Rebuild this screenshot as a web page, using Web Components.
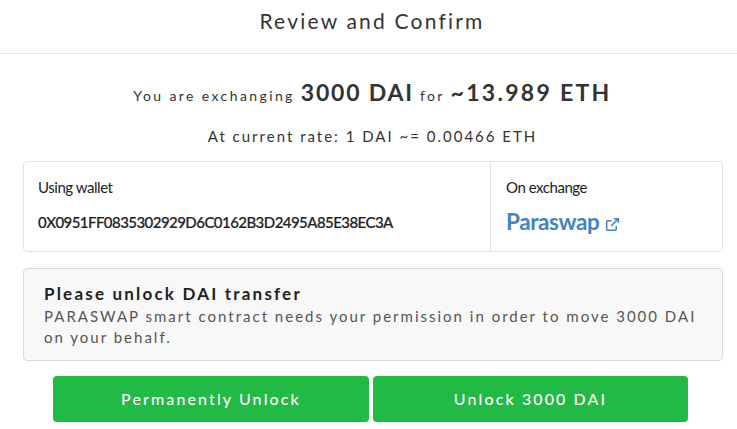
<!DOCTYPE html>
<html lang="en">
<head>
<meta charset="UTF-8">
<title>Review and Confirm</title>
<style>
  html, body { margin: 0; background: #fff; }
  body { font-family: Lato, "Liberation Sans", sans-serif; color: #333; }
</style>
</head>
<body>
<review-dialog>
  <span slot="title">Review and Confirm</span>
  <exchange-summary from="3000 DAI" to="~13.989 ETH" rate="At current rate: 1 DAI ~= 0.00466 ETH"></exchange-summary>
  <info-card wallet="0X0951FF0835302929D6C0162B3D2495A85E38EC3A" exchange="Paraswap"></info-card>
  <notice-box heading="Please unlock DAI transfer">PARASWAP smart contract needs your permission in order to move 3000 DAI on your behalf.</notice-box>
  <action-row>
    <green-button style="width:316px">Permanently Unlock</green-button>
    <green-button style="width:315px">Unlock 3000 DAI</green-button>
  </action-row>
</review-dialog>

<script>
  customElements.define("review-dialog", class extends HTMLElement {
    constructor() {
      super();
      this.attachShadow({ mode: "open" });
      this.shadowRoot.innerHTML = `<style>
        :host { display: block; width: 737px; height: 429px; overflow: hidden; box-sizing: border-box; }
        header {
          height: 54px;
          box-sizing: border-box;
          border-bottom: 1px solid #e5e5e5;
          display: flex;
          justify-content: center;
          padding: 8px 0 0 7px;
          font-size: 21px;
          line-height: 26px;
          letter-spacing: 2.2px;
          color: #333;
        }
        main { display: flex; flex-direction: column; padding: 0 15px 0 23px; }
      </style>
      <header><slot name="title"></slot></header>
      <main><slot></slot></main>`
    }
  });

  customElements.define("exchange-summary", class extends HTMLElement {
    constructor() {
      super();
      this.attachShadow({ mode: "open" });
    }

    connectedCallback() {
      this.shadowRoot.innerHTML = `<style>
        :host { display: block; text-align: center; color: #333; }
        .line { font-size: 14px; letter-spacing: 2.4px; line-height: 30px; padding-top: 23px; }
        b { font-size: 23px; letter-spacing: 1.8px; font-weight: 700; }
        b + b { letter-spacing: 2.3px; }
        .rate { font-size: 15px; letter-spacing: 2px; line-height: 20px; margin-top: 15px; margin-bottom: 15px; }
      </style>
      <div class="line">You are exchanging <b>${this.getAttribute("from")}</b> for <b>${this.getAttribute("to")}</b></div>
      <div class="rate">${this.getAttribute("rate")}</div>`
    }
  });

  customElements.define("info-card", class extends HTMLElement {
    constructor() {
      super();
      this.attachShadow({ mode: "open" });
    }

    connectedCallback() {
      this.shadowRoot.innerHTML = `<style>
        :host {
          display: grid;
          grid-template-columns: 466px 1fr;
          width: 700px;
          height: 91px;
          box-sizing: border-box;
          border: 1px solid #e2e2e2;
          border-radius: 4px;
          color: #222;
        }
        section { padding: 16px 14px 0; }
        section + section { border-left: 1px solid #e2e2e2; padding-left: 15px; }
        .label { font-size: 15px; letter-spacing: -0.45px; line-height: 18px; margin-bottom: 17px; }
        .wallet { font-size: 15px; letter-spacing: -0.55px; line-height: 18px; font-weight: 500; -webkit-text-stroke: 0.2px #222; }
        a { display: flex; align-items: center; gap: 6px; font-size: 22.5px; letter-spacing: -0.4px; line-height: 24px; font-weight: 700; color: #4183c4; text-decoration: none; }
        svg { width: 15px; height: 15px; margin-top: 4px; }
      </style>
      <section>
        <div class="label">Using wallet</div>
        <div class="wallet">${this.getAttribute("wallet")}</div>
      </section>
      <section>
        <div class="label" style="margin-bottom:14px">On exchange</div>
        <a href="#">${this.getAttribute("exchange")}
          <svg viewBox="0 0 16 16" fill="none" stroke="currentColor" stroke-width="1.6">
            <path d="M12 9.5V13a1.2 1.2 0 0 1-1.2 1.2H3A1.2 1.2 0 0 1 1.8 13V5.2A1.2 1.2 0 0 1 3 4h4"/>
            <path d="M6.5 9.5 14 2"/>
            <path d="M9.5 1.8h4.7v4.7"/>
          </svg>
        </a>
      </section>`
    }
  });

  customElements.define("notice-box", class extends HTMLElement {
    constructor() {
      super();
      this.attachShadow({ mode: "open" });
    }

    connectedCallback() {
      this.shadowRoot.innerHTML = `<style>
        :host {
          display: block;
          width: 700px;
          height: 93px;
          margin-top: 16px;
          box-sizing: border-box;
          padding: 14px 20px 0;
          background: #f8f8f8;
          border: 1px solid #d9d9d9;
          border-radius: 4px;
        }
        h4 { margin: 0 0 1px; font-size: 17px; letter-spacing: 2.2px; line-height: 22px; font-weight: 700; color: #222; }
        p { margin: 0; font-size: 15px; letter-spacing: 2px; line-height: 21px; color: #555; }
      </style>
      <h4>${this.getAttribute("heading")}</h4>
      <p><slot></slot></p>`
    }
  });

  customElements.define("action-row", class extends HTMLElement {
    constructor() {
      super();
      this.attachShadow({ mode: "open" });
      this.shadowRoot.innerHTML = `<style>
        :host { display: flex; gap: 4px; margin: 15px 0 0 30px; }
      </style><slot></slot>`
    }
  });

  customElements.define("green-button", class extends HTMLElement {
    constructor() {
      super();
      this.attachShadow({ mode: "open" });
      this.shadowRoot.innerHTML = `<style>
        :host {
          display: flex;
          justify-content: center;
          align-items: center;
          height: 46px;
          box-sizing: border-box;
          padding-bottom: 2px;
          background: #21ba45;
          border-radius: 4px;
          color: #fff;
          font-size: 16px;
          font-weight: 500;
          letter-spacing: 2.1px;
        }
      </style><slot></slot>`
    }
  });
</script>
</body>
</html>
